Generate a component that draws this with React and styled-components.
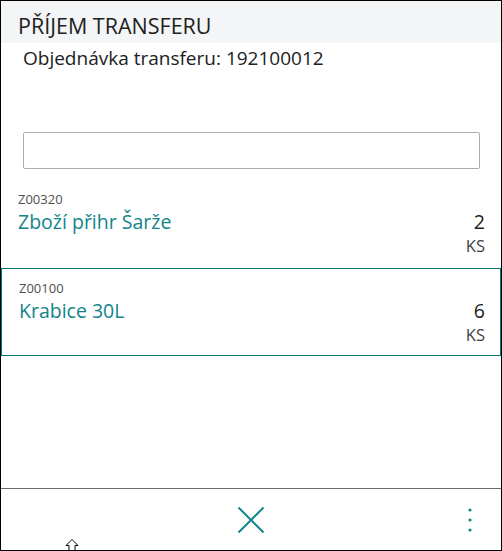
import React from 'react';
import styled, { createGlobalStyle } from 'styled-components';

const GlobalStyle = createGlobalStyle`
  * { box-sizing: border-box; }
  body {
    margin: 0;
    font-family: "Open Sans", "Noto Sans", sans-serif;
    color: #212121;
    background: #fff;
  }
`;

const Screen = styled.div`
  position: relative;
  display: flex;
  flex-direction: column;
  width: 502px;
  height: 551px;
  border: 1px solid #000;
  background: #fff;
  overflow: hidden;
`;

const TitleBar = styled.header`
  display: flex;
  align-items: center;
  height: 42px;
  padding: 7px 0 0 17px;
  background: #f4f5f7;
  font-size: 21.5px;
  color: #212121;
`;

const Subtitle = styled.div`
  padding: 2px 0 0 22px;
  font-size: 19px;
  line-height: 26px;
  color: #212121;
`;

const SearchInput = styled.input`
  display: block;
  width: 457px;
  height: 37px;
  margin: 61px 0 0 22px;
  border: 1px solid #ababab;
  border-radius: 2px;
  outline: none;
  font: inherit;
`;

const List = styled.div`
  display: flex;
  flex-direction: column;
  margin-top: 14px;
`;

const Item = styled.div`
  display: flex;
  justify-content: space-between;
  height: ${({ $selected }) => ($selected ? '88px' : '85px')};
  padding: ${({ $selected }) => ($selected ? '11px 15px 0 17px' : '8px 16px 0 17px')};
  border: ${({ $selected }) => ($selected ? '1px solid #00777c' : '0')};
`;

const ItemMain = styled.div`
  display: flex;
  flex-direction: column;
`;

const Code = styled.div`
  font-size: 13px;
  line-height: 16px;
  color: #4f4f4f;
`;

const Name = styled.div`
  margin-top: 2px;
  font-size: 19.5px;
  line-height: 26px;
  color: #13848a;
`;

const Qty = styled.div`
  display: flex;
  flex-direction: column;
  align-items: flex-end;
  padding-top: 19px;
`;

const QtyValue = styled.div`
  font-size: 19.5px;
  line-height: 24px;
  color: #212121;
`;

const Unit = styled.div`
  font-size: 16.5px;
  line-height: 24px;
  color: #444;
`;

const Footer = styled.footer`
  display: flex;
  align-items: center;
  justify-content: center;
  position: relative;
  height: 62px;
  margin-top: auto;
  border-top: 1px solid #6b6b6b;
`;

const IconButton = styled.button`
  display: flex;
  align-items: center;
  justify-content: center;
  padding: 0;
  border: 0;
  background: none;
  color: #11868c;
`;

const MoreButton = styled(IconButton)`
  position: absolute;
  right: 28px;
  top: 18px;
`;

const Pointer = styled.svg`
  position: absolute;
  left: 64px;
  bottom: -1px;
`;

const items = [
  { code: 'Z00320', name: 'Zboží přihr Šarže', qty: 2, unit: 'KS' },
  { code: 'Z00100', name: 'Krabice 30L', qty: 6, unit: 'KS', selected: true },
];

export default function App() {
  return (
    <>
      <GlobalStyle />
      <Screen>
        <TitleBar>PŘÍJEM TRANSFERU</TitleBar>
        <Subtitle>Objednávka transferu: 192100012</Subtitle>
        <SearchInput />
        <List>
          {items.map((item) => (
            <Item key={item.code} $selected={item.selected}>
              <ItemMain>
                <Code>{item.code}</Code>
                <Name>{item.name}</Name>
              </ItemMain>
              <Qty>
                <QtyValue>{item.qty}</QtyValue>
                <Unit>{item.unit}</Unit>
              </Qty>
            </Item>
          ))}
        </List>
        <Footer>
          <IconButton aria-label="Zavřít">
            <svg width="28" height="28" viewBox="0 0 28 28">
              <path d="M1.5 1.5 L26.5 26.5 M26.5 1.5 L1.5 26.5" stroke="currentColor" strokeWidth="2" fill="none" />
            </svg>
          </IconButton>
          <MoreButton aria-label="Více">
            <svg width="6" height="26" viewBox="0 0 6 26">
              <circle cx="3" cy="3" r="1.6" fill="currentColor" />
              <circle cx="3" cy="13" r="1.6" fill="currentColor" />
              <circle cx="3" cy="23" r="1.6" fill="currentColor" />
            </svg>
          </MoreButton>
          <Pointer width="14" height="12" viewBox="0 0 14 12">
            <path d="M7 0.5 L13 6.5 L10 6.5 L10 11.5 L4 11.5 L4 6.5 L1 6.5 Z" fill="#fff" stroke="#000" strokeWidth="1" />
          </Pointer>
        </Footer>
      </Screen>
    </>
  );
}
